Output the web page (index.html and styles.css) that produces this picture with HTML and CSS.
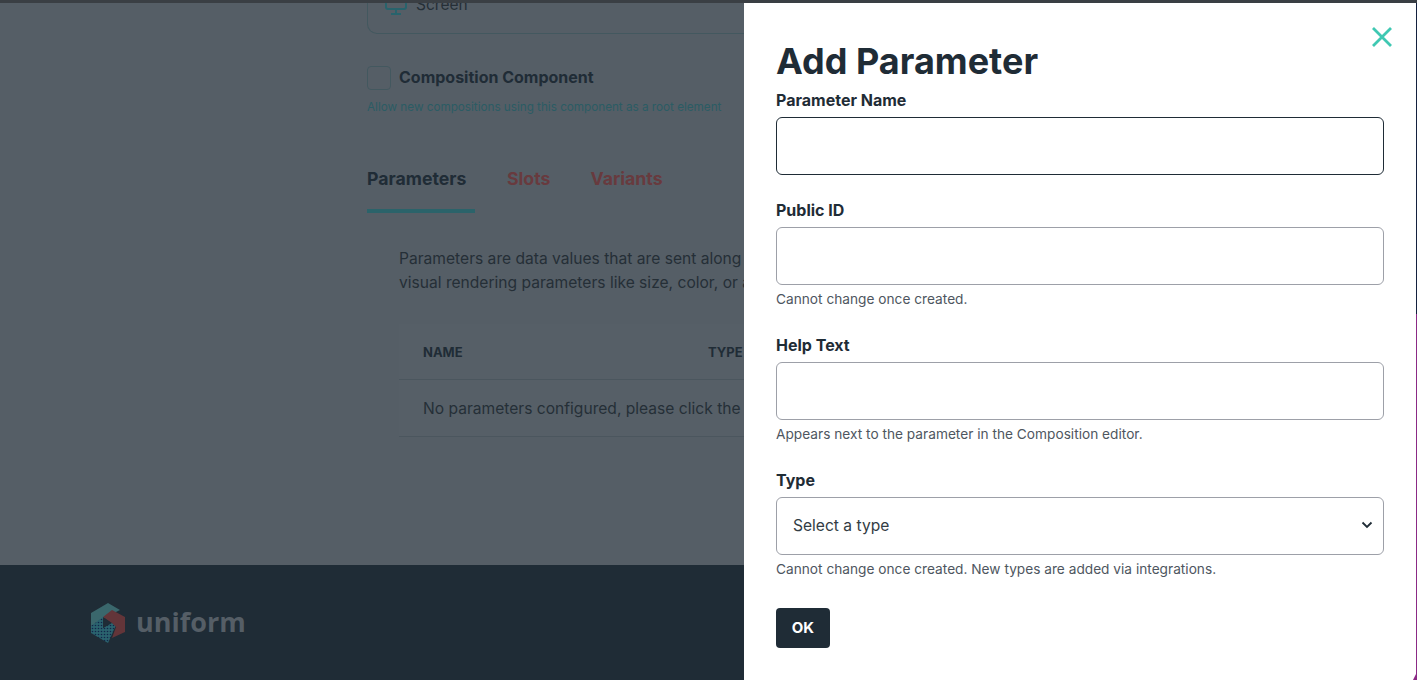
FILE: index.html
```html
<!DOCTYPE html>
<html lang="en">
<head>
<meta charset="utf-8">
<title>Add Parameter</title>
<link rel="stylesheet" href="styles.css">
</head>
<body>
<div class="app">
  <div class="topstrip"></div>
  <main class="main">
    <div class="content">
      <div class="screen-box">
        <svg class="screen-icon" viewBox="0 0 24 24" width="24" height="24" fill="none" stroke="currentColor" stroke-width="2"><rect x="2" y="-6" width="20" height="16" rx="2"/><path d="M12 10v5M7 15h10"/></svg>
        <span class="screen-name">Screen</span>
      </div>
      <div class="check-row">
        <span class="checkbox"></span>
        <span class="check-label">Composition Component</span>
      </div>
      <p class="check-help">Allow new compositions using this component as a root element</p>
      <div class="tabs">
        <span class="tab tab-active">Parameters</span>
        <span class="tab tab-link">Slots</span>
        <span class="tab tab-link">Variants</span>
      </div>
      <div class="tab-panel">
        <p class="intro">Parameters are data values that are sent along with the component to the front end, such as<br>visual rendering parameters like size, color, or alignment of the component variant.</p>
        <div class="table">
          <div class="thead"><span class="col-name">NAME</span><span>TYPE</span></div>
          <div class="trow">No parameters configured, please click the plus button to add a parameter.</div>
        </div>
      </div>
    </div>
  </main>
  <footer class="footer">
    <svg class="logo" viewBox="0 0 34 40" width="34" height="40">
      <defs>
        <pattern id="dots" width="3" height="3" patternUnits="userSpaceOnUse">
          <rect width="3" height="3" fill="#2a636e"/>
          <circle cx="1.5" cy="1.5" r=".8" fill="#12264a"/>
        </pattern>
      </defs>
      <path d="M17 0 29 7 21 11 12 16 0 23V10Z" fill="#3a676c"/>
      <path d="M0 23 12 14V25L21 20 25 22 17 40 0 30Z" fill="url(#dots)"/>
      <path d="M21 7 34 14V29L21 35 25 24 21 20 12 14Z" fill="#633539"/>
      <path d="M12 14 20 20 12 25Z" fill="#1f2c36"/>
    </svg>
    <span class="wordmark">uniform</span>
  </footer>
  <aside class="drawer">
    <button class="close" type="button" aria-label="Close">
      <svg viewBox="0 0 22 22" width="22" height="22" fill="none" stroke="#3fc8b2" stroke-width="2.8"><path d="M2 2 20 20M20 2 2 20"/></svg>
    </button>
    <h1 class="title">Add Parameter</h1>
    <form class="form">
      <div class="field">
        <label class="label">Parameter Name</label>
        <div class="input input-focus"></div>
      </div>
      <div class="field">
        <label class="label">Public ID</label>
        <div class="input"></div>
        <p class="hint">Cannot change once created.</p>
      </div>
      <div class="field">
        <label class="label">Help Text</label>
        <div class="input"></div>
        <p class="hint">Appears next to the parameter in the Composition editor.</p>
      </div>
      <div class="field">
        <label class="label">Type</label>
        <div class="input select">
          <span>Select a type</span>
          <svg viewBox="0 0 12 8" width="12" height="8" fill="none" stroke="#1f2c36" stroke-width="1.8"><path d="M1.5 1.5 6 6l4.500-4.500"/></svg>
        </div>
        <p class="hint">Cannot change once created. New types are added via integrations.</p>
      </div>
      <button class="ok" type="button">OK</button>
    </form>
  </aside>
  <div class="edge"></div>
  <div class="corner"></div>
</div>
</body>
</html>
```
FILE: styles.css
```css
* { box-sizing: border-box; }
html, body { margin: 0; height: 100%; overflow: hidden; }
body { font-family: Inter, "Liberation Sans", sans-serif; color: #1f2c36; }
p, h1 { margin: 0; }

.app { position: relative; width: 1417px; height: 680px; display: flex; flex-direction: column; background: #555e66; overflow: hidden; }
.topstrip { height: 3px; flex: none; background: #3a3f44; }
.main { flex: 1; overflow: hidden; padding-left: 367px; }
.content { width: 1000px; }

.screen-box { height: 31px; width: 1000px; border: 1px solid #43585f; border-top: 0; border-radius: 0 0 10px 10px; padding-left: 16px; display: flex; align-items: flex-start; gap: 8px; color: #252f37; font-size: 15.500px; line-height: 4px; }
.screen-name { white-space: nowrap; }
.screen-icon { color: #28636c; flex: none; margin-top: -4px; }

.check-row { display: flex; align-items: center; gap: 8px; margin-top: 32px; }
.checkbox { width: 24px; height: 24px; border: 1px solid #43585f; border-radius: 4px; }
.check-label { font-size: 16px; font-weight: 700; line-height: 22px; color: #202c36; position: relative; top: -1px; }
.check-help { margin-top: 8px; font-size: 11.700px; line-height: 18px; color: #2b5c64; }

.tabs { display: flex; gap: 32px; margin-top: 47px; height: 50px; }
.tab { font-size: 17.700px; font-weight: 700; line-height: 22px; padding: 5px 8px 0 0; }
.tab-active { color: #202c36; border-bottom: 4px solid #2b636a; width: 108px; }
.tab-link { color: #683a3e; }

.tab-panel { padding: 34px 0 0 32px; }
.intro { font-size: 15.600px; line-height: 24px; color: #252f37; white-space: nowrap; }
.table { margin-top: 29px; width: 900px; background: #565f67; }
.thead { height: 56px; padding-left: 24px; display: flex; align-items: center; font-size: 13px; font-weight: 700; color: #202c36; border-bottom: 1px solid #4b565e; }
.col-name { width: 285px; }
.trow { height: 57px; padding-left: 24px; display: flex; align-items: center; font-size: 15.600px; color: #252f37; border-bottom: 1px solid #4b565e; white-space: nowrap; }

.footer { height: 115px; flex: none; background: #1f2c36; padding-left: 91px; display: flex; align-items: center; gap: 11px; }
.logo { flex: none; margin-top: 1px; }
.wordmark { font-family: "Open Sans", sans-serif; font-weight: 700; font-size: 27px; color: #555e66; line-height: 1; margin-top: -2px; }

.drawer { position: absolute; top: 3px; left: 744px; bottom: 0; width: 672px; background: #fff; padding: 36px 32px 0; }
.close { position: absolute; top: 23px; right: 23px; padding: 0; border: 0; background: none; display: flex; }
.title { font-size: 36px; font-weight: 700; line-height: 44px; color: #1f2c36; }
.form { margin-top: 7px; }
.field { margin-bottom: 25px; }
.label { display: block; font-size: 16px; font-weight: 700; line-height: 20px; margin-bottom: 7px; color: #1f2c36; }
.input { height: 58px; border: 1px solid #9da0a8; border-radius: 6px; background: #fff; }
.input-focus { border-color: #1f2c36; }
.select { display: flex; align-items: center; justify-content: space-between; padding: 0 10px 2px 16px; font-size: 15.600px; color: #333c44; }
.hint { margin-top: 4px; padding-bottom: 1px; font-size: 13.700px; line-height: 20px; color: #4e5660; }
.ok { display: block; margin-top: 28px; width: 54px; height: 40px; padding-bottom: 2px; border: 0; border-radius: 4px; background: #1f2c36; color: #fff; font: 700 15px Inter, sans-serif; }
.edge { position: absolute; top: 3px; right: 0; bottom: 0; width: 1px; background: linear-gradient(#14213f 0, #14213f 46%, #8b2a85 46%, #8b2a85 100%); }
.corner { position: absolute; right: 0; bottom: 0; width: 4px; height: 8px; background: #8b2a85; clip-path: polygon(100% 0, 100% 100%, 0 100%); }
```
